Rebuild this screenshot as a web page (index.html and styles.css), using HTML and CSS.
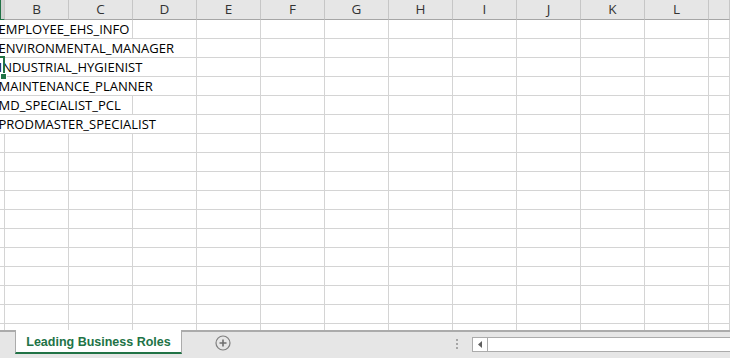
FILE: index.html
```html
<!DOCTYPE html>
<html>
<head>
<meta charset="utf-8">
<link rel="stylesheet" href="styles.css">
</head>
<body>
<div class="app">
  <div class="sheet">
    <div class="row head">
      <div class="c a sel"></div><div class="c">B</div><div class="c">C</div><div class="c">D</div><div class="c">E</div><div class="c">F</div><div class="c">G</div><div class="c">H</div><div class="c">I</div><div class="c">J</div><div class="c">K</div><div class="c">L</div><div class="c"></div>
    </div>
    <div class="row"><div class="c txt s3">EMPLOYEE_EHS_INFO</div><div class="c"></div><div class="c"></div><div class="c"></div><div class="c"></div><div class="c"></div><div class="c"></div><div class="c"></div><div class="c"></div><div class="c"></div><div class="c"></div></div>
    <div class="row"><div class="c txt s4">ENVIRONMENTAL_MANAGER</div><div class="c"></div><div class="c"></div><div class="c"></div><div class="c"></div><div class="c"></div><div class="c"></div><div class="c"></div><div class="c"></div><div class="c"></div></div>
    <div class="row"><div class="c txt s4 active">INDUSTRIAL_HYGIENIST<span class="selbox"></span><span class="handle"></span></div><div class="c"></div><div class="c"></div><div class="c"></div><div class="c"></div><div class="c"></div><div class="c"></div><div class="c"></div><div class="c"></div><div class="c"></div></div>
    <div class="row"><div class="c txt s4">MAINTENANCE_PLANNER</div><div class="c"></div><div class="c"></div><div class="c"></div><div class="c"></div><div class="c"></div><div class="c"></div><div class="c"></div><div class="c"></div><div class="c"></div></div>
    <div class="row"><div class="c txt s3">MD_SPECIALIST_PCL</div><div class="c"></div><div class="c"></div><div class="c"></div><div class="c"></div><div class="c"></div><div class="c"></div><div class="c"></div><div class="c"></div><div class="c"></div><div class="c"></div></div>
    <div class="row"><div class="c txt s4">PRODMASTER_SPECIALIST</div><div class="c"></div><div class="c"></div><div class="c"></div><div class="c"></div><div class="c"></div><div class="c"></div><div class="c"></div><div class="c"></div><div class="c"></div></div>
    <div class="row"><div class="c"></div><div class="c"></div><div class="c"></div><div class="c"></div><div class="c"></div><div class="c"></div><div class="c"></div><div class="c"></div><div class="c"></div><div class="c"></div><div class="c"></div><div class="c"></div><div class="c"></div></div>
    <div class="row"><div class="c"></div><div class="c"></div><div class="c"></div><div class="c"></div><div class="c"></div><div class="c"></div><div class="c"></div><div class="c"></div><div class="c"></div><div class="c"></div><div class="c"></div><div class="c"></div><div class="c"></div></div>
    <div class="row"><div class="c"></div><div class="c"></div><div class="c"></div><div class="c"></div><div class="c"></div><div class="c"></div><div class="c"></div><div class="c"></div><div class="c"></div><div class="c"></div><div class="c"></div><div class="c"></div><div class="c"></div></div>
    <div class="row"><div class="c"></div><div class="c"></div><div class="c"></div><div class="c"></div><div class="c"></div><div class="c"></div><div class="c"></div><div class="c"></div><div class="c"></div><div class="c"></div><div class="c"></div><div class="c"></div><div class="c"></div></div>
    <div class="row"><div class="c"></div><div class="c"></div><div class="c"></div><div class="c"></div><div class="c"></div><div class="c"></div><div class="c"></div><div class="c"></div><div class="c"></div><div class="c"></div><div class="c"></div><div class="c"></div><div class="c"></div></div>
    <div class="row"><div class="c"></div><div class="c"></div><div class="c"></div><div class="c"></div><div class="c"></div><div class="c"></div><div class="c"></div><div class="c"></div><div class="c"></div><div class="c"></div><div class="c"></div><div class="c"></div><div class="c"></div></div>
    <div class="row"><div class="c"></div><div class="c"></div><div class="c"></div><div class="c"></div><div class="c"></div><div class="c"></div><div class="c"></div><div class="c"></div><div class="c"></div><div class="c"></div><div class="c"></div><div class="c"></div><div class="c"></div></div>
    <div class="row"><div class="c"></div><div class="c"></div><div class="c"></div><div class="c"></div><div class="c"></div><div class="c"></div><div class="c"></div><div class="c"></div><div class="c"></div><div class="c"></div><div class="c"></div><div class="c"></div><div class="c"></div></div>
    <div class="row"><div class="c"></div><div class="c"></div><div class="c"></div><div class="c"></div><div class="c"></div><div class="c"></div><div class="c"></div><div class="c"></div><div class="c"></div><div class="c"></div><div class="c"></div><div class="c"></div><div class="c"></div></div>
    <div class="row"><div class="c"></div><div class="c"></div><div class="c"></div><div class="c"></div><div class="c"></div><div class="c"></div><div class="c"></div><div class="c"></div><div class="c"></div><div class="c"></div><div class="c"></div><div class="c"></div><div class="c"></div></div>
    <div class="row"><div class="c"></div><div class="c"></div><div class="c"></div><div class="c"></div><div class="c"></div><div class="c"></div><div class="c"></div><div class="c"></div><div class="c"></div><div class="c"></div><div class="c"></div><div class="c"></div><div class="c"></div></div>
  </div>
  <div class="tabs">
    <div class="tab">Leading Business Roles</div>
    <div class="add">
      <svg width="16" height="16" viewBox="0 0 16 16"><circle cx="8" cy="8" r="7" fill="none" stroke="#7f7f7f" stroke-width="1.2"/><path d="M8 4.5v7M4.5 8h7" stroke="#6f6f6f" stroke-width="1.6"/></svg>
    </div>
    <div class="spacer"></div>
    <div class="dots"><i></i><i></i><i></i></div>
    <div class="hscroll">
      <div class="btn"><svg width="5" height="7" viewBox="0 0 5 7"><path d="M4 0v7L0 3.5z" fill="#5f5f5f"/></svg></div>
      <div class="track"></div>
    </div>
  </div>
</div>
</body>
</html>
```
FILE: styles.css
```css
html, body {
  margin: 0;
  padding: 0;
  background: #fff;
}
.app {
  width: 730px;
  height: 358px;
  overflow: hidden;
  display: flex;
  flex-direction: column;
  font-family: "Open Sans", "Liberation Sans", Arial, sans-serif;
}
.sheet {
  height: 330px;
  overflow: hidden;
  flex: none;
}
.row {
  display: grid;
  grid-template-columns: 5px repeat(11, 64px) 1fr;
  height: 19px;
}
.c {
  box-sizing: border-box;
  border-right: 1px solid #d4d4d4;
  border-bottom: 1px solid #d4d4d4;
  height: 19px;
  position: relative;
}
.head {
  height: 20px;
  background: #e6e6e6;
}
.head .c {
  height: 20px;
  border-right: 1px solid #c6c6c6;
  border-bottom: 1px solid #a6a6a6;
  font-size: 13.5px;
  color: #333;
  text-align: center;
  line-height: 19px;
}
.head .sel {
  border-left: 1px solid #217346;
  background: #d2d2d2;
  border-bottom: 1px solid #217346;
}
.txt {
  font-size: 13px;
  color: #000;
  white-space: nowrap;
  line-height: 19px;
  text-indent: -1.5px;
}
.s3 { grid-column: span 3; }
.s4 { grid-column: span 4; }
.selbox {
  position: absolute;
  left: -2px;
  top: -2px;
  width: 5px;
  height: 19px;
  border: 2px solid #217346;
  border-left: none;
}
.handle {
  position: absolute;
  left: 1px;
  top: 16px;
  width: 5px;
  height: 5px;
  background: #217346;
  box-shadow: 0 0 0 1px #fff;
}
.tabs {
  flex: 1;
  display: flex;
  align-items: flex-start;
  background: #e6e6e6;
  border-top: 2px solid #ababab;
  position: relative;
  font-family: "Liberation Sans", Arial, sans-serif;
}
.tab {
  margin-left: 15px;
  margin-top: -2px;
  width: 167px;
  height: 24px;
  box-sizing: border-box;
  background: #fff;
  border-left: 1px solid #ababab;
  border-right: 1px solid #ababab;
  border-bottom: 2px solid #217346;
  color: #217346;
  font-weight: bold;
  font-size: 12.5px;
  line-height: 24px;
  text-align: center;
}
.add {
  margin-left: 33px;
  margin-top: 3px;
  width: 16px;
  height: 16px;
}
.add svg { display: block; }
.spacer { flex: 1; }
.dots {
  margin-top: 7px;
  width: 2px;
  display: flex;
  flex-direction: column;
  gap: 2px;
}
.dots i {
  display: block;
  width: 2px;
  height: 2px;
  background: #a6a6a6;
}
.hscroll {
  margin-left: 14px;
  margin-top: 5px;
  width: 258px;
  height: 15px;
  box-sizing: border-box;
  border: 1px solid #ababab;
  border-right: none;
  background: #fff;
  display: flex;
}
.btn {
  width: 15px;
  box-sizing: border-box;
  border-right: 1px solid #ababab;
  display: flex;
  align-items: center;
  justify-content: center;
}
.btn svg { display: block; }
.track { flex: 1; }
```
